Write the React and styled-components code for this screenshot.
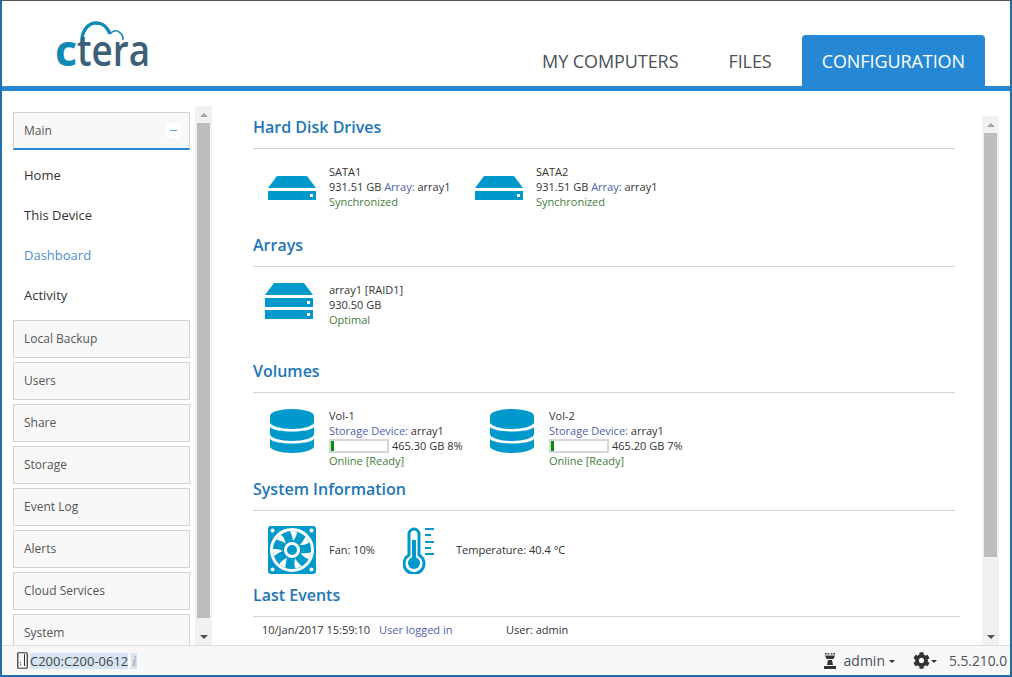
import React from 'react'
import styled, { createGlobalStyle } from 'styled-components'
import { FaCog } from 'react-icons/fa'

const Global = createGlobalStyle`
  html, body {
    margin: 0;
    padding: 0;
    background: #fff;
    font-family: "Open Sans", "Liberation Sans", sans-serif;
    color: #333;
  }
`

const Frame = styled.div`
  box-sizing: border-box;
  width: 1012px;
  height: 677px;
  display: flex;
  flex-direction: column;
  overflow: hidden;
  border-top: 1px solid #555;
  border-left: 2px solid #1f6fae;
  border-right: 2px solid #1f6fae;
  border-bottom: 2px solid #1f6fae;
`

const Header = styled.header`
  flex: none;
  height: 85px;
  display: flex;
  justify-content: space-between;
  align-items: flex-end;
  border-bottom: 5px solid #2688d4;
`

const LogoWrap = styled.div`
  align-self: flex-start;
  padding: 19px 0 0 55px;

  svg {
    display: block;
    overflow: visible;
  }
`

const Tabs = styled.nav`
  display: flex;
  gap: 10px;
  padding-right: 25px;
`

const Tab = styled.div`
  height: 51px;
  padding: 0 20px;
  box-sizing: border-box;
  display: flex;
  align-items: center;
  font-size: 18px;
  letter-spacing: -0.08px;
  border-radius: 4px 4px 0 0;
  color: ${p => (p.$active ? '#fff' : '#4a5058')};
  background: ${p => (p.$active ? '#2688d4' : 'transparent')};
`

const Body = styled.div`
  flex: 1;
  min-height: 0;
  display: flex;
`

const Sidebar = styled.aside`
  flex: none;
  width: 177px;
  padding: 21px 5px 0 11px;
  display: flex;
  flex-direction: column;
  gap: 4px;
  overflow: hidden;
`

const MenuBox = styled.div`
  flex: none;
  box-sizing: border-box;
  height: 38px;
  padding: 0 10px ${p => (p.$open ? 0 : 2)}px;
  display: flex;
  align-items: center;
  justify-content: space-between;
  font-size: 12px;
  color: #555;
  background: #f8f8f8;
  border: 1px solid #d2d2d2;
  border-bottom: ${p => (p.$open ? '2px solid #2688d4' : '1px solid #d2d2d2')};
`

const Collapse = styled.span`
  width: 15px;
  height: 15px;
  margin-right: -2px;
  background: #fff;
  border-radius: 3px;
  display: flex;
  align-items: center;
  justify-content: center;

  &::before {
    content: '';
    width: 7px;
    height: 1px;
    background: #4a9be0;
  }
`

const SubList = styled.div`
  flex: none;
  padding: 1px 0 1px;
  display: flex;
  flex-direction: column;
`

const SubItem = styled.div`
  height: 40px;
  padding-left: 11px;
  display: flex;
  align-items: center;
  font-size: 13px;
  color: ${p => (p.$active ? '#4a8fcf' : '#333')};
`

const Track = styled.div`
  flex: none;
  width: 17px;
  margin-top: ${p => p.$top}px;
  margin-right: ${p => p.$right || 0}px;
  background: #f1f1f1;
  display: flex;
  flex-direction: column;
  align-items: center;
`

const Arrow = styled.div`
  flex: none;
  height: 17px;
  width: 100%;
  display: flex;
  align-items: center;
  justify-content: center;

  &::before {
    content: '';
    border-left: 4px solid transparent;
    border-right: 4px solid transparent;
    ${p => (p.$down ? 'border-top: 4px solid #505050;' : 'border-bottom: 4px solid #a3a3a3;')}
  }
`

const Thumb = styled.div`
  flex: none;
  width: 13px;
  height: ${p => p.$height}px;
  background: #bdbdbd;
`

const Spacer = styled.div`
  flex: 1;
`

const Main = styled.main`
  flex: 1;
  min-width: 0;
  margin-left: 7px;
  padding: 25px 27px 0 34px;
  overflow: hidden;
`

const Section = styled.section`
  height: ${p => p.$height}px;
  margin-right: ${p => p.$bleed || 0}px;
`

const Title = styled.h2`
  margin: 0;
  height: 32px;
  line-height: 22px;
  font-size: 16px;
  font-weight: 600;
  color: #1d76b8;
  border-bottom: 1px solid #d4d4d4;
`

const Row = styled.div`
  display: flex;
  padding-top: 15px;
`

const Item = styled.div`
  flex: none;
  width: ${p => p.$width}px;
  display: flex;
`

const IconCell = styled.div`
  flex: none;
  box-sizing: border-box;
  width: 76px;
  padding-left: ${p => p.$inset}px;
  padding-top: ${p => p.$top || 0}px;

  svg {
    display: block;
  }
`

const Lines = styled.div`
  font-size: 11px;
  line-height: 15px;
  white-space: nowrap;
`

const SensorText = styled(Lines)`
  padding-bottom: 2px;
`

const Accent = styled.span`
  color: #4f5fb0;
`

const Status = styled.div`
  color: #3f8038;
`

const MeterRow = styled.div`
  display: flex;
  align-items: center;
  gap: 3px;
  height: 15px;
`

const Meter = styled.div`
  box-sizing: border-box;
  width: 60px;
  height: 14px;
  border: 2px solid #d5d5dc;
`

const MeterFill = styled.div`
  height: 100%;
  background: #0c8a0c;
`

const SensorRow = styled.div`
  display: flex;
  align-items: center;
  padding-top: 15px;
`

const Sensor = styled.div`
  flex: none;
  width: ${p => p.$width}px;
  display: flex;
  align-items: center;
`

const SensorIcon = styled.div`
  flex: none;
  box-sizing: border-box;
  width: ${p => p.$width}px;
  padding-left: ${p => p.$inset}px;

  svg {
    display: block;
  }
`

const EventRow = styled.div`
  display: flex;
  padding: 5px 0 0 9px;
  font-size: 11px;
  line-height: 15px;
`

const EventCell = styled.div`
  flex: none;
  width: ${p => p.$width}px;
  color: ${p => (p.$link ? '#4f5fb0' : '#333')};
`

const Footer = styled.footer`
  flex: none;
  box-sizing: border-box;
  height: 30px;
  padding: 0 3px 0 15px;
  display: flex;
  align-items: center;
  justify-content: space-between;
  background: #f8f8f8;
  border-top: 1px solid #dcdcdc;
`

const FooterGroup = styled.div`
  display: flex;
  align-items: center;
`

const Selected = styled.span`
  margin-left: 2px;
  height: 16px;
  line-height: 16px;
  font-size: 13px;
  color: #444;
  background: #d6e4f4;
`

const InfoMark = styled.span`
  margin-left: 3px;
  width: 6px;
  height: 16px;
  font: italic bold 15px/16px "Liberation Serif", serif;
  color: #b4b4b4;
  background: #d6e4f4;
  text-align: center;
`

const UserName = styled.span`
  margin-left: 7px;
  font-size: 14px;
  color: #4a5058;
`

const Caret = styled.span`
  margin-left: ${p => p.$left}px;
  margin-top: 2px;
  border-left: 3px solid transparent;
  border-right: 3px solid transparent;
  border-top: 3px solid #333;
`

const GearIcon = styled(FaCog)`
  margin-left: 18px;
  width: 17px;
  height: 17px;
  color: #333;
`

const Version = styled.span`
  margin-left: 12px;
  font-size: 13.75px;
  color: #4a5058;
`

const BLUE = '#0099cc'

const Logo = () => (
  <svg width="96" height="50" viewBox="0 0 96 50">
    <path d="M25 23 C24 10 32 3 39 3 C46 3 51 8 53 14" fill="none" stroke="#0f8ab5" strokeWidth="3.4" />
    <path d="M53 14 C56 10 60 10 62 12 C64 13 66 16 66 20" fill="none" stroke="#0f8ab5" strokeWidth="1.6" />
    <text x="-2" y="46" fill="#0f8ab5" fontFamily="'Open Sans', sans-serif" fontWeight="700" fontSize="43">c</text>
    <text x="20" y="46" fill="#3d5f78" fontFamily="'Open Sans', sans-serif" fontWeight="600" fontSize="43" textLength="73" lengthAdjust="spacingAndGlyphs">tera</text>
  </svg>
)

const DriveIcon = () => (
  <svg width="48" height="24" viewBox="0 0 48 24">
    <path d="M9 0H39L48 12H0Z" fill={BLUE} />
    <path d="M0 15H48V24H0Z" fill={BLUE} />
    <path d="M42 18H45V21H42Z" fill="#fff" />
  </svg>
)

const ArrayIcon = () => (
  <svg width="48" height="36" viewBox="0 0 48 36">
    <path d="M9 0H39L48 12H0Z" fill={BLUE} />
    <path d="M0 15H48V24H0Z" fill={BLUE} />
    <path d="M42 18H45V21H42Z" fill="#fff" />
    <path d="M0 27H48V36H0Z" fill={BLUE} />
    <path d="M42 30H45V33H42Z" fill="#fff" />
  </svg>
)

const VolumeIcon = () => (
  <svg width="44" height="44" viewBox="0 0 44 44">
    <path d="M0 7A22 7 0 0 1 44 7V13A22 7 0 0 1 0 13Z" fill={BLUE} />
    <path d="M0 18C5 24 39 24 44 18V25A22 7 0 0 1 0 25Z" fill={BLUE} />
    <path d="M0 30C5 36 39 36 44 30V37A22 7 0 0 1 0 37Z" fill={BLUE} />
  </svg>
)

const FanIcon = () => (
  <svg width="48" height="48" viewBox="0 0 48 48">
    <rect width="48" height="48" rx="3" fill={BLUE} />
    <circle cx="4.5" cy="4.5" r="2" fill="#fff" />
    <circle cx="43.5" cy="4.5" r="2" fill="#fff" />
    <circle cx="4.5" cy="43.5" r="2" fill="#fff" />
    <circle cx="43.5" cy="43.5" r="2" fill="#fff" />
    <circle cx="24" cy="24" r="20.5" fill="none" stroke="#fff" strokeWidth="3" />
    {[0, 51, 103, 154, 206, 257, 309].map(a => (
      <path key={a} d="M22 5 L29 5.5 C29 9 27.5 12 25 15 C24.5 11 23.5 8 22 5Z" fill="#fff" transform={`rotate(${a} 24 24)`} />
    ))}
    <circle cx="24" cy="24" r="6.5" fill="none" stroke="#fff" strokeWidth="3" />
  </svg>
)

const ThermoIcon = () => (
  <svg width="31" height="48" viewBox="0 0 31 48">
    <path d="M6 28V7A5 5 0 0 1 16 7V28A10 10 0 1 1 6 28Z" fill="none" stroke={BLUE} strokeWidth="3" transform="translate(0 1)" />
    <path d="M9 14H13V32H9Z" fill={BLUE} />
    <circle cx="11" cy="37" r="6" fill={BLUE} />
    <path d="M22 3H31M22 9H28M22 16H31M22 22H28M22 28H31" stroke={BLUE} strokeWidth="2" />
  </svg>
)

const DeviceIcon = () => (
  <svg width="11" height="17" viewBox="0 0 11 17">
    <rect x="0.75" y="0.75" width="9.5" height="15.5" rx="1" fill="none" stroke="#333" strokeWidth="1.2" />
    <path d="M3 10h1v1H3zM3 12.5h1v1H3zM7 2h1v12H7z" fill="#333" />
  </svg>
)

const AdminIcon = () => (
  <svg width="14" height="16" viewBox="0 0 14 16">
    <path d="M2 0h1.6v1.5H2zM4.6 0h1.6v1.5H4.6zM7.8 0h1.6v1.5H7.8zM10.4 0H12v1.5h-1.6z" fill="#333" />
    <path d="M2 2.5H12L10.5 6H3.5Z" fill="#333" />
    <path d="M5 7H9L10 12H4Z" fill="#333" />
    <path d="M1 13H13V16H1Z" fill="#333" />
  </svg>
)

const menus = ['Local Backup', 'Users', 'Share', 'Storage', 'Event Log', 'Alerts', 'Cloud Services', 'System']

const ScrollBar = ({ top, right, thumb }) => (
  <Track $top={top} $right={right}>
    <Arrow />
    <Thumb $height={thumb} />
    <Spacer />
    <Arrow $down />
  </Track>
)

const Drive = ({ name, width }) => (
  <Item $width={width}>
    <IconCell $inset={15} $top={12}>
      <DriveIcon />
    </IconCell>
    <Lines>
      <div>{name}</div>
      <div>931.51 GB <Accent>Array:</Accent> array1</div>
      <Status>Synchronized</Status>
    </Lines>
  </Item>
)

const Volume = ({ name, size, percent }) => (
  <Item $width={220}>
    <IconCell $inset={17} $top={1}>
      <VolumeIcon />
    </IconCell>
    <Lines>
      <div>{name}</div>
      <div><Accent>Storage Device:</Accent> array1</div>
      <MeterRow>
        <Meter>
          <MeterFill style={{ width: `${percent * 0.4}px` }} />
        </Meter>
        {size} GB {percent}%
      </MeterRow>
      <Status>Online [Ready]</Status>
    </Lines>
  </Item>
)

const App = () => {
  return (
    <Frame>
      <Global />
      <Header>
        <LogoWrap>
          <Logo />
        </LogoWrap>
        <Tabs>
          <Tab>MY COMPUTERS</Tab>
          <Tab>FILES</Tab>
          <Tab $active>CONFIGURATION</Tab>
        </Tabs>
      </Header>
      <Body>
        <Sidebar>
          <MenuBox $open>
            Main
            <Collapse />
          </MenuBox>
          <SubList>
            <SubItem>Home</SubItem>
            <SubItem>This Device</SubItem>
            <SubItem $active>Dashboard</SubItem>
            <SubItem>Activity</SubItem>
          </SubList>
          {menus.map(m => (
            <MenuBox key={m}>{m}</MenuBox>
          ))}
        </Sidebar>
        <ScrollBar top={15} thumb={495} />
        <Main>
          <Section $height={118}>
            <Title>Hard Disk Drives</Title>
            <Row>
              <Drive name="SATA1" width={207} />
              <Drive name="SATA2" width={207} />
            </Row>
          </Section>
          <Section $height={126}>
            <Title>Arrays</Title>
            <Row>
              <Item $width={300}>
                <IconCell $inset={12} $top={1}>
                  <ArrayIcon />
                </IconCell>
                <Lines>
                  <div>array1 [RAID1]</div>
                  <div>930.50 GB</div>
                  <Status>Optimal</Status>
                </Lines>
              </Item>
            </Row>
          </Section>
          <Section $height={118}>
            <Title>Volumes</Title>
            <Row>
              <Volume name="Vol-1" size="465.30" percent={8} />
              <Volume name="Vol-2" size="465.20" percent={7} />
            </Row>
          </Section>
          <Section $height={106}>
            <Title>System Information</Title>
            <SensorRow>
              <Sensor $width={150}>
                <SensorIcon $width={76} $inset={15}>
                  <FanIcon />
                </SensorIcon>
                <SensorText>Fan: 10%</SensorText>
              </Sensor>
              <Sensor $width={300}>
                <SensorIcon $width={53} $inset={0}>
                  <ThermoIcon />
                </SensorIcon>
                <SensorText>Temperature: 40.4 °C</SensorText>
              </Sensor>
            </SensorRow>
          </Section>
          <Section $height={60} $bleed={-5}>
            <Title>Last Events</Title>
            <EventRow>
              <EventCell $width={117}>10/Jan/2017 15:59:10</EventCell>
              <EventCell $width={127} $link>User logged in</EventCell>
              <EventCell $width={100}>User: admin</EventCell>
            </EventRow>
          </Section>
        </Main>
        <ScrollBar top={25} right={11} thumb={424} />
      </Body>
      <Footer>
        <FooterGroup>
          <DeviceIcon />
          <Selected>C200:C200-0612</Selected>
          <InfoMark>i</InfoMark>
        </FooterGroup>
        <FooterGroup>
          <AdminIcon />
          <UserName>admin</UserName>
          <Caret $left={4} />
          <GearIcon />
          <Caret $left={1} />
          <Version>5.5.210.0</Version>
        </FooterGroup>
      </Footer>
    </Frame>
  )
}

export default App
